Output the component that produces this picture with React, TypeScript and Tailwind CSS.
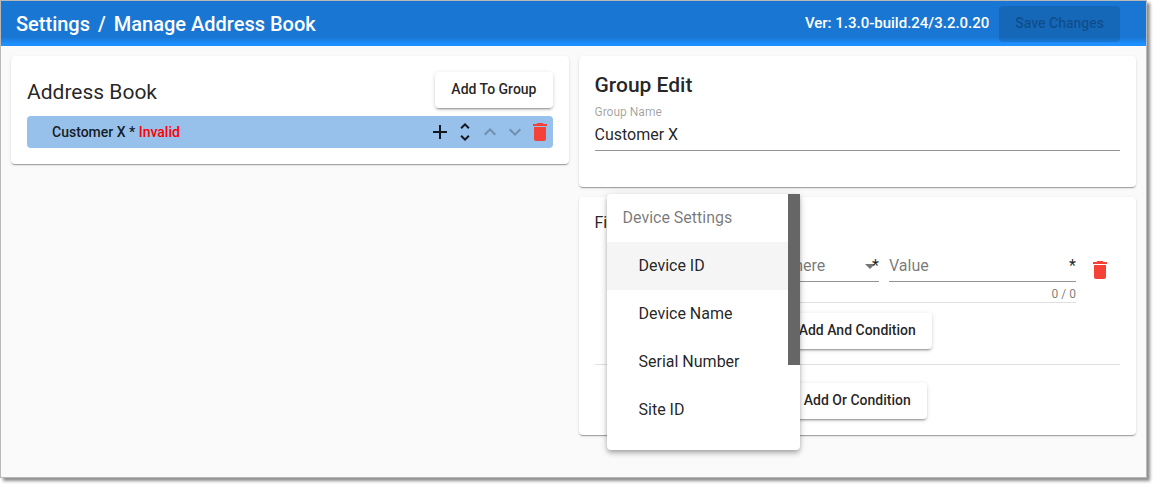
import React from "react";

const card =
  "rounded bg-white p-4 shadow-[0_2px_1px_-1px_rgba(0,0,0,0.2),0_1px_1px_0_rgba(0,0,0,0.14),0_1px_3px_0_rgba(0,0,0,0.12)]";

function RaisedButton({ children }: { children: React.ReactNode }) {
  return (
    <button
      type="button"
      className="h-9 rounded bg-white px-4 pb-0.5 text-sm font-medium text-black/87 shadow-[0_3px_1px_-2px_rgba(0,0,0,0.2),0_2px_2px_0_rgba(0,0,0,0.14),0_1px_5px_0_rgba(0,0,0,0.12)]"
    >
      {children}
    </button>
  );
}

function Icon({ d, className = "" }: { d: string; className?: string }) {
  return (
    <svg viewBox="0 0 24 24" className={`block fill-current ${className}`} aria-hidden="true">
      <path d={d} />
    </svg>
  );
}

const PLUS = "M19 13h-6v6h-2v-6H5v-2h6V5h2v6h6v2z";
const UNFOLD =
  "M12 5.83L15.17 9l1.41-1.41L12 3 7.41 7.59 8.83 9 12 5.83zm0 12.34L8.83 15l-1.41 1.41L12 21l4.59-4.59L15.17 15 12 18.17z";
const UP = "M12 8l-6 6 1.41 1.41L12 10.83l4.59 4.58L18 14z";
const DOWN = "M16.59 8.59L12 13.17 7.41 8.59 6 10l6 6 6-6z";
const TRASH = "M6 19c0 1.1.9 2 2 2h8c1.1 0 2-.9 2-2V7H6v12zM19 4h-3.5l-1-1h-5l-1 1H5v2h14V4z";

const actions = [
  { label: "Add entry", d: PLUS, tone: "text-black/87", off: false },
  { label: "Expand", d: UNFOLD, tone: "text-black/87", off: false },
  { label: "Move up", d: UP, tone: "text-black/26", off: true },
  { label: "Move down", d: DOWN, tone: "text-black/26", off: true },
  { label: "Delete entry", d: TRASH, tone: "text-[#f44336]", off: false },
];

const options = ["Device ID", "Device Name", "Serial Number", "Site ID"];

function OptionsPanel() {
  return (
    <div className="absolute -top-14 -left-4 z-10 flex h-64 w-[193px] overflow-hidden rounded rounded-tr-none bg-white shadow-[0_2px_4px_-1px_rgba(0,0,0,0.2),0_4px_5px_0_rgba(0,0,0,0.14),0_1px_10px_0_rgba(0,0,0,0.12)]">
      <div role="listbox" aria-label="Device Settings" className="flex-1 text-base">
        <div className="flex h-12 items-center px-4 text-black/54">Device Settings</div>
        {options.map((o, i) => (
          <div
            key={o}
            role="option"
            aria-selected={i === 0}
            className={`flex h-12 items-center px-8 text-black/87 ${i === 0 ? "bg-black/4" : ""}`}
          >
            {o}
          </div>
        ))}
      </div>
      <div className="h-[171px] w-3 bg-[#666666]" />
    </div>
  );
}

export default function App() {
  return (
    <div className="flex min-h-screen bg-white pr-1.5 pb-1.5 font-[Roboto,sans-serif] text-black/87">
      <div className="flex flex-1 flex-col border border-[#b9b9b9] bg-[#fafafa] shadow-[3px_3px_3px_rgba(0,0,0,0.45)]">
        <header className="flex h-[45px] items-center bg-linear-to-b from-[#1976d2] from-80% to-[#1e90ff] to-95% pr-[26px] pl-[15px] text-white">
          <h1 className="flex gap-2 text-xl font-medium">
            <a href="#settings">Settings</a>
            <span>/</span>
            <span>Manage Address Book</span>
          </h1>
          <span className="ml-auto text-[15px] font-medium">Ver: 1.3.0-build.24/3.2.0.20</span>
          <button
            type="button"
            disabled
            className="ml-2.5 h-9 rounded bg-black/12 px-4 pb-0.5 text-sm font-medium text-black/26"
          >
            Save Changes
          </button>
        </header>

        <main className="grid grid-cols-2 items-start gap-2.5 p-2.5">
          <section className={card}>
            <div className="flex items-center justify-between">
              <h2 className="pt-1 text-[21px] leading-[26px]">Address Book</h2>
              <RaisedButton>Add To Group</RaisedButton>
            </div>
            <div className="mt-2 flex h-8 items-center rounded-sm bg-[#97c0ea] pl-[25px] text-sm font-medium">
              <span>
                Customer X * <span className="text-[#ff0000]">Invalid</span>
              </span>
              <div className="ml-auto flex">
                {actions.map((a) => (
                  <button
                    key={a.label}
                    type="button"
                    aria-label={a.label}
                    disabled={a.off}
                    className={`flex h-6 w-[25px] items-center justify-center ${a.tone}`}
                  >
                    <Icon d={a.d} className="size-6" />
                  </button>
                ))}
              </div>
            </div>
          </section>

          <div className="flex flex-col gap-2.5">
            <section className={`${card} pb-9`}>
              <h2 className="text-[21px] leading-[26px] font-medium">Group Edit</h2>
              <label htmlFor="group-name" className="mt-1.5 block text-xs text-black/38">
                Group Name
              </label>
              <input
                id="group-name"
                defaultValue="Customer X"
                className="block h-[31px] w-full border-b border-black/42 pb-0.5 text-base outline-none"
              />
            </section>

            <section className={card}>
              <h3 className="text-base leading-5">Filters</h3>
              <div className="relative mt-[17px] flex pl-7">
                <div className="flex-1 border-b border-black/12">
                  <div className="flex gap-2.5">
                    <div className="relative flex-1">
                      <select
                        aria-label="Field"
                        className="block h-8 w-full appearance-none border-b border-black/42 text-base text-black/54 outline-none"
                      >
                        <option>Field</option>
                      </select>
                      <OptionsPanel />
                    </div>
                    <div className="relative w-[99px]">
                      <select
                        aria-label="Where"
                        className="block h-8 w-full appearance-none border-b border-black/42 text-base text-black/54 outline-none"
                      >
                        <option>Where</option>
                      </select>
                      <svg viewBox="0 0 10 5" className="absolute top-3.5 right-1 h-[5px] w-2.5 fill-black/54">
                        <path d="M0 0h10L5 5z" />
                      </svg>
                      <span className="absolute top-1 right-0 text-base leading-6">*</span>
                    </div>
                    <div className="relative w-[187px]">
                      <input
                        aria-label="Value"
                        placeholder="Value"
                        className="block h-8 w-full border-b border-black/42 text-base outline-none placeholder:text-black/54"
                      />
                      <span className="absolute top-1 right-0 text-base leading-6">*</span>
                    </div>
                  </div>
                  <div className="pt-1 text-right text-xs text-black/54">0 / 0</div>
                </div>
                <button type="button" aria-label="Delete condition" className="mt-2 mr-2 ml-3 size-6 text-[#f44336]">
                  <Icon d={TRASH} className="size-6" />
                </button>
              </div>
              <div className="flex justify-center border-b border-black/12 pt-2.5 pb-[15px]">
                <RaisedButton>Add And Condition</RaisedButton>
              </div>
              <div className="flex justify-center pt-[18px]">
                <RaisedButton>Add Or Condition</RaisedButton>
              </div>
            </section>
          </div>
        </main>
      </div>
    </div>
  );
}
